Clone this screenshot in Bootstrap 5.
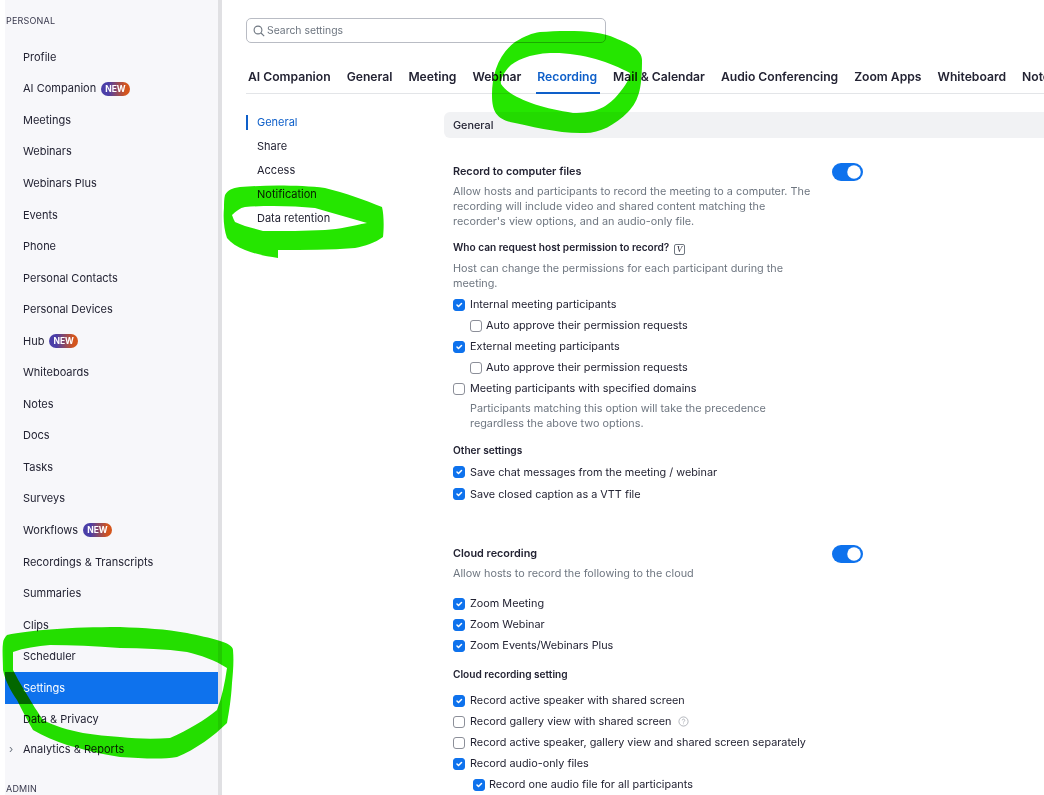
<!DOCTYPE html>
<html lang="en">
  <head>
    <meta charset="UTF-8" />
    <meta name="viewport" content="width=device-width, initial-scale=1" />
    <title>Settings</title>
    <link
      href="https://cdn.jsdelivr.net/npm/bootstrap@5.3.0/dist/css/bootstrap.min.css"
      rel="stylesheet"
    />
    <style>
      html, body { height: 795px; overflow: hidden; }
      body { font-family: Inter, "Liberation Sans", sans-serif; font-size: 10.85px; color: #232333; background: #fff; position: relative; }
      .page-wrap { height: 795px; padding-left: 5px; }

      .side-bar { width: 217px; flex: none; height: 795px; background: #f7f7fa; border-right: 4px solid #e0e0e3; overflow: hidden; }
      .side-label { font-size: 9px; letter-spacing: .2px; color: #39394d; margin-left: 1px; line-height: 12px; }
      .side-list { margin-top: 14.25px; }
      .side-item { height: 31.55px; padding-left: 18px; color: #232333; position: relative; text-decoration: none; font-size: 11px; }
      .side-item.active { background: #0e72ed; color: #fff; }
      .side-item:last-child { margin-top: -1.75px; }
      .side-caret { position: absolute; left: 4px; top: 9px; font-size: 11px; color: #6e7680; line-height: 12px; }
      .new-tag { font-size: 8.5px; font-weight: 700; line-height: 14px; height: 14px; padding: 0 4px; margin-left: 5px; border-radius: 7px; color: #fff; background: linear-gradient(90deg, #4b3fa8 25%, #d4551c 85%); }

      .main-area { min-width: 0; flex: 1; padding: 18px 0 0 24px; overflow: hidden; }
      .search-box { width: 360px; height: 25px; border: 1px solid #b9bcc4; border-radius: 5px; padding-left: 6px; color: #6e7680; font-size: 10.4px; gap: 2px; }
      .tab-row { margin-top: 23px; height: 28px; border-bottom: 1px solid #e3e5e8; flex-wrap: nowrap; gap: 16px; padding-left: 2px; white-space: nowrap; }
      .tab-link { font-size: 12.15px; font-weight: 600; color: #232333; padding: 3px 0 0; line-height: 15px; height: 28px; }
      .tab-link.active { color: #0e5fc9; border-bottom: 2px solid #0e5fc9; margin: 0 -3px 0 -1px; padding-left: 1px; padding-right: 3px; }

      .sub-nav { width: 198px; flex: none; padding-top: 16px; }
      .sub-link { height: 24px; line-height: 24px; padding-left: 11px; color: #232333; position: relative; font-size: 11px; }
      .sub-link.active { color: #0e5fc9; }
      .sub-link.active::before { content: ""; position: absolute; left: 0; top: 5px; width: 2px; height: 15px; background: #0e5fc9; }

      .settings-col { flex: 1; padding-top: 18px; min-width: 0; }
      .panel-head { height: 26px; line-height: 26px; background: #f1f2f4; border-radius: 6px 0 0 6px; padding-left: 9px; font-weight: 500; }
      .setting-block { padding-left: 9px; position: relative; width: 420px; }
      .setting-title { font-weight: 600; line-height: 15px; }
      .setting-sub { font-weight: 600; font-size: 10.15px; line-height: 14px; }
      .hint { color: #6e7680; line-height: 15px; max-width: 365px; }
      .vee-mark { display: inline-block; border: 1px solid #6e7680; border-radius: 2px; font: italic 9px/9px "Liberation Serif", serif; width: 11px; height: 11px; text-align: center; margin-left: 2px; vertical-align: -1px; }

      .check-row { height: 21px; margin: 0; padding: 0; display: flex; align-items: center; gap: 5px; }
      .check-row .form-check-input { width: 12px; height: 12px; margin: 0; flex: none; float: none; border-color: #8c8f99; border-radius: 3px; }
      .form-check-input:checked { background-color: #0e72ed; border-color: #0e72ed; }
      .indent-a { padding-left: 17px; gap: 4px; }
      .indent-b { padding-left: 20px; gap: 4px; }
      .hint-in { padding-left: 17px; }
      .help-mark { margin-left: 2px; }
      .switch-holder { position: absolute; right: 1px; top: -1px; padding: 0; margin: 0; min-height: 0; }
      .switch-holder .form-check-input { width: 31px; height: 18px; margin: 0; border: 0; float: none; display: block; }

      .scribble { position: absolute; left: 0; top: 0; width: 1044px; height: 795px; mix-blend-mode: multiply; pointer-events: none; }
    </style>
  </head>
  <body>
    <div class="page-wrap d-flex">
      <!-- Sidebar -->
      <aside class="side-bar">
        <div class="side-label" style="margin-top: 15px">PERSONAL</div>
        <div class="side-list d-flex flex-column">
          <a class="side-item d-flex align-items-center">Profile</a>
          <a class="side-item d-flex align-items-center">AI Companion<span class="new-tag">NEW</span></a>
          <a class="side-item d-flex align-items-center">Meetings</a>
          <a class="side-item d-flex align-items-center">Webinars</a>
          <a class="side-item d-flex align-items-center">Webinars Plus</a>
          <a class="side-item d-flex align-items-center">Events</a>
          <a class="side-item d-flex align-items-center">Phone</a>
          <a class="side-item d-flex align-items-center">Personal Contacts</a>
          <a class="side-item d-flex align-items-center">Personal Devices</a>
          <a class="side-item d-flex align-items-center">Hub<span class="new-tag">NEW</span></a>
          <a class="side-item d-flex align-items-center">Whiteboards</a>
          <a class="side-item d-flex align-items-center">Notes</a>
          <a class="side-item d-flex align-items-center">Docs</a>
          <a class="side-item d-flex align-items-center">Tasks</a>
          <a class="side-item d-flex align-items-center">Surveys</a>
          <a class="side-item d-flex align-items-center">Workflows<span class="new-tag">NEW</span></a>
          <a class="side-item d-flex align-items-center">Recordings &amp; Transcripts</a>
          <a class="side-item d-flex align-items-center">Summaries</a>
          <a class="side-item d-flex align-items-center">Clips</a>
          <a class="side-item d-flex align-items-center">Scheduler</a>
          <a class="side-item active d-flex align-items-center">Settings</a>
          <a class="side-item d-flex align-items-center">Data &amp; Privacy</a>
          <a class="side-item d-flex align-items-center"><span class="side-caret">›</span>Analytics &amp; Reports</a>
        </div>
        <div class="side-label" style="margin-top: 17.5px">ADMIN</div>
      </aside>

      <main class="main-area">
        <div class="search-box d-flex align-items-center">
          <svg width="12" height="12" viewBox="0 0 12 12" fill="none" stroke="#6e7680" stroke-width="1.1"><circle cx="5" cy="5" r="3.9"/><path d="M8 8l3.2 3.2"/></svg>
          <span>Search settings</span>
        </div>

        <div class="tab-row nav">
          <a class="tab-link nav-link">AI Companion</a>
          <a class="tab-link nav-link">General</a>
          <a class="tab-link nav-link">Meeting</a>
          <a class="tab-link nav-link">Webinar</a>
          <a class="tab-link nav-link active">Recording</a>
          <a class="tab-link nav-link">Mail &amp; Calendar</a>
          <a class="tab-link nav-link">Audio Conferencing</a>
          <a class="tab-link nav-link">Zoom Apps</a>
          <a class="tab-link nav-link">Whiteboard</a>
          <a class="tab-link nav-link">Notes</a>
        </div>

        <div class="d-flex">
          <div class="sub-nav">
            <div class="sub-link active">General</div>
            <div class="sub-link">Share</div>
            <div class="sub-link">Access</div>
            <div class="sub-link">Notification</div>
            <div class="sub-link">Data retention</div>
          </div>

          <div class="settings-col">
            <div class="panel-head">General</div>

            <div class="setting-block" style="margin-top: 26px">
              <div class="form-check form-switch switch-holder"><input class="form-check-input" type="checkbox" checked /></div>
              <div class="setting-title">Record to computer files</div>
              <div class="hint" style="margin-top: 5px">Allow hosts and participants to record the meeting to a computer. The recording will include video and shared content matching the recorder's view options, and an audio-only file.</div>
              <div class="setting-sub" style="margin-top: 11px">Who can request host permission to record? <span class="vee-mark">V</span></div>
              <div class="hint" style="margin-top: 6px; margin-bottom: 3px">Host can change the permissions for each participant during the meeting.</div>
              <label class="check-row"><input class="form-check-input" type="checkbox" checked />Internal meeting participants</label>
              <label class="check-row indent-a"><input class="form-check-input" type="checkbox" />Auto approve their permission requests</label>
              <label class="check-row"><input class="form-check-input" type="checkbox" checked />External meeting participants</label>
              <label class="check-row indent-a"><input class="form-check-input" type="checkbox" />Auto approve their permission requests</label>
              <label class="check-row"><input class="form-check-input" type="checkbox" />Meeting participants with specified domains</label>
              <div class="hint hint-in" style="margin-top: 2px">Participants matching this option will take the precedence regardless the above two options.</div>
              <div class="setting-sub" style="margin-top: 12px; margin-bottom: 4px">Other settings</div>
              <label class="check-row" style="height: 22px"><input class="form-check-input" type="checkbox" checked />Save chat messages from the meeting / webinar</label>
              <label class="check-row" style="height: 22px"><input class="form-check-input" type="checkbox" checked />Save closed caption as a VTT file</label>
            </div>

            <div class="setting-block" style="margin-top: 41px">
              <div class="form-check form-switch switch-holder"><input class="form-check-input" type="checkbox" checked /></div>
              <div class="setting-title">Cloud recording</div>
              <div class="hint" style="margin-top: 5px; margin-bottom: 12px">Allow hosts to record the following to the cloud</div>
              <label class="check-row"><input class="form-check-input" type="checkbox" checked />Zoom Meeting</label>
              <label class="check-row"><input class="form-check-input" type="checkbox" checked />Zoom Webinar</label>
              <label class="check-row"><input class="form-check-input" type="checkbox" checked />Zoom Events/Webinars Plus</label>
              <div class="setting-sub" style="margin-top: 11px; margin-bottom: 9px">Cloud recording setting</div>
              <label class="check-row"><input class="form-check-input" type="checkbox" checked />Record active speaker with shared screen</label>
              <label class="check-row"><input class="form-check-input" type="checkbox" />Record gallery view with shared screen
                <svg class="help-mark" width="11" height="11" viewBox="0 0 12 12" fill="none" stroke="#9a9da6" stroke-width=".8"><circle cx="6" cy="6" r="5"/><path d="M4.6 4.7a1.4 1.4 0 1 1 2.1 1.3c-.5.3-.7.5-.7 1"/><path d="M6 8.2v.7"/></svg>
              </label>
              <label class="check-row"><input class="form-check-input" type="checkbox" />Record active speaker, gallery view and shared screen separately</label>
              <label class="check-row"><input class="form-check-input" type="checkbox" checked />Record audio-only files</label>
              <label class="check-row indent-b"><input class="form-check-input" type="checkbox" checked />Record one audio file for all participants</label>
            </div>
          </div>
        </div>
      </main>
    </div>

    <!-- green marker scribbles drawn over the screenshot -->
    <svg class="scribble" viewBox="0 0 1044 795" fill="#25e600" fill-rule="evenodd">
      <path d="M540 32C565 30 600 30 615 38C630 44 642 50 642 60C642 85 640 100 628 112C615 125 600 133 585 133C560 134 530 126 510 122C497 118 492 112 492 95C492 75 498 55 515 42C525 36 532 33 540 32ZM550 53C530 54 515 60 508 68C503 74 500 80 501 84C510 98 540 108 573 113C595 113 605 108 615 98C622 90 630 80 630 73C610 62 580 52 550 53Z" />
      <path d="M225 195C228 190 232 188 240 187C265 185 300 185 325 188C345 193 365 200 382 207C384 215 384 228 383 237C375 243 365 246 355 248C330 250 305 250 278 250L278 258C265 256 255 254 245 250C237 247 231 243 227 238C224 230 223 218 224 208C224 203 224 199 225 195ZM232 215C236 211 240 208 245 207C270 205 295 206 315 208C332 213 350 218 367 223C352 226 340 229 325 230C305 231 285 231 263 231C253 228 243 226 235 222C234 220 233 218 232 215Z" />
      <path d="M7 635C30 630 70 627 120 627C145 628 165 629 187 633C210 638 233 642 233 650C234 662 233 672 232 683C231 700 229 712 227 723C215 735 195 750 177 757C160 760 140 758 120 757C100 754 85 750 67 745C55 741 43 736 33 730C27 720 22 710 17 700C10 690 5 680 3 670C3 660 2 650 3 643C3 640 5 637 7 635ZM13 652C13 658 13 664 13 670C20 684 28 696 35 708C38 712 40 716 43 720C55 726 68 730 83 733C95 735 108 736 120 737C138 739 155 739 170 738C188 730 205 720 217 710C222 697 225 682 227 668C215 660 200 655 187 652C165 649 142 648 120 648C95 646 72 645 50 645C37 646 24 648 13 652Z" />
    </svg>

    <script src="https://cdn.jsdelivr.net/npm/bootstrap@5.3.0/dist/js/bootstrap.bundle.min.js"></script>
  </body>
</html>
